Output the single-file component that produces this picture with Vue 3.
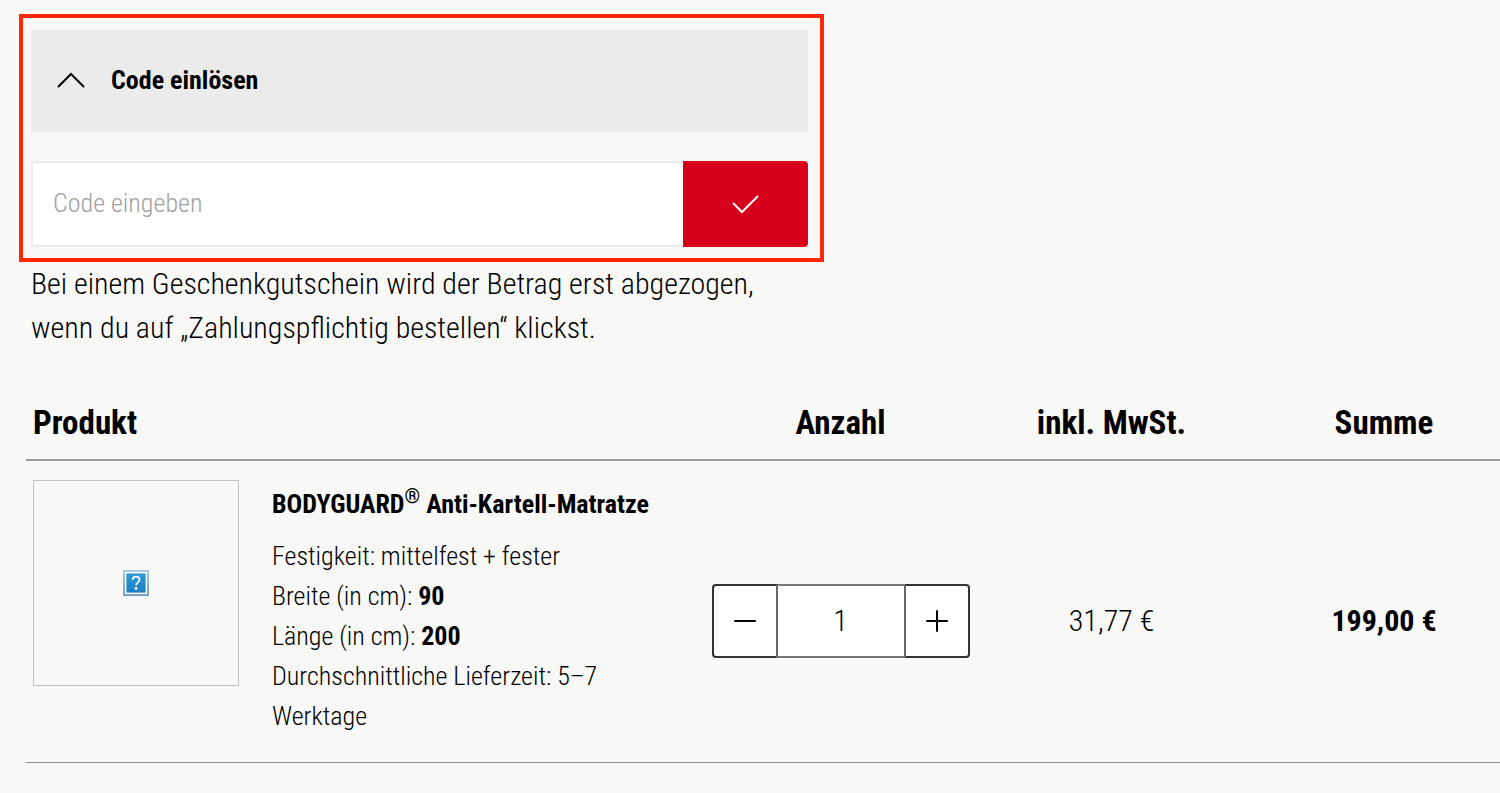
<script setup>
import { ref } from 'vue'

const code = ref('')
const open = ref(true)
const quantity = ref(1)

function decrease() {
  if (quantity.value > 1) quantity.value--
}
function increase() {
  quantity.value++
}
</script>

<template>
  <main class="cart">
    <section class="coupon">
      <button class="coupon-toggle" type="button" :aria-expanded="open" @click="open = !open">
        <svg width="28" height="16" viewBox="0 0 28 16" aria-hidden="true">
          <path d="M1.5 14.5 14 2l12.5 12.5" fill="none" stroke="#000" stroke-width="2" stroke-linecap="round" />
        </svg>
        <span>Code einlösen</span>
      </button>
      <form v-if="open" class="coupon-form" @submit.prevent>
        <input v-model="code" class="coupon-input" type="text" placeholder="Code eingeben" aria-label="Code eingeben" />
        <button class="coupon-submit" type="submit" aria-label="Code bestätigen">
          <svg width="28" height="20" viewBox="0 0 28 20" aria-hidden="true">
            <path d="M1.5 9.5 10 18 25.5 2.5" fill="none" stroke="#fff" stroke-width="2" stroke-linecap="round" />
          </svg>
        </button>
      </form>
    </section>

    <p class="note">
      Bei einem Geschenkgutschein wird der Betrag erst abgezogen,<br />
      wenn du auf „Zahlungspflichtig bestellen“ klickst.
    </p>

    <table class="items">
      <colgroup>
        <col />
        <col class="col-number" />
        <col class="col-number" />
        <col class="col-sum" />
      </colgroup>
      <thead>
        <tr>
          <th class="first" scope="col">Produkt</th>
          <th scope="col">Anzahl</th>
          <th scope="col">inkl. MwSt.</th>
          <th class="sum" scope="col">Summe</th>
        </tr>
      </thead>
      <tbody>
        <tr>
          <td class="first">
            <div class="product">
              <div class="thumb">
                <svg width="26" height="26" viewBox="0 0 27 27" role="img" aria-label="Bild fehlt">
                  <defs>
                    <linearGradient id="frame" x2="0" y2="1">
                      <stop offset="0" stop-color="#a4c8e8" />
                      <stop offset="1" stop-color="#6f9bca" />
                    </linearGradient>
                    <linearGradient id="fill" x2="0" y2="1">
                      <stop offset="0" stop-color="#2f9bd6" />
                      <stop offset="1" stop-color="#1b7fc0" />
                    </linearGradient>
                  </defs>
                  <rect width="27" height="27" fill="url(#frame)" />
                  <rect x="2" y="2" width="23" height="23" fill="#fff" />
                  <rect x="3.5" y="3.5" width="20" height="20" fill="url(#fill)" />
                  <path d="M10 10.2c.1-2 1.6-3.2 3.6-3.2s3.5 1.1 3.5 3c0 2.8-3.5 2.9-3.5 6" fill="none" stroke="#fff" stroke-width="1.8" />
                  <circle cx="13.5" cy="19.2" r="1.5" fill="#fff" />
                </svg>
              </div>
              <div class="details">
                <h2>BODYGUARD<sup>®</sup> Anti-Kartell-Matratze</h2>
                <p>Festigkeit: mittelfest + fester</p>
                <p>Breite (in cm): <strong>90</strong></p>
                <p>Länge (in cm): <strong>200</strong></p>
                <p>Durchschnittliche Lieferzeit: 5–7<br />Werktage</p>
              </div>
            </div>
          </td>
          <td>
            <div class="stepper">
              <button type="button" aria-label="Weniger" @click="decrease">
                <svg width="24" height="24" viewBox="0 0 24 24" aria-hidden="true">
                  <path d="M2 12h20" stroke="#000" stroke-width="2" stroke-linecap="round" />
                </svg>
              </button>
              <input v-model="quantity" type="text" inputmode="numeric" aria-label="Anzahl" />
              <button type="button" aria-label="Mehr" @click="increase">
                <svg width="24" height="24" viewBox="0 0 24 24" aria-hidden="true">
                  <path d="M2 12h20M12 2v20" stroke="#000" stroke-width="2" stroke-linecap="round" />
                </svg>
              </button>
            </div>
          </td>
          <td class="price">31,77 €</td>
          <td class="price sum"><strong>199,00 €</strong></td>
        </tr>
      </tbody>
    </table>
  </main>
</template>

<style>
body {
  margin: 0;
  background: #f8f8f7;
}
</style>

<style scoped>
* {
  box-sizing: border-box;
}
.cart {
  padding-top: 14px;
  color: #000;
  font-family: "Roboto Condensed", "Liberation Sans Narrow", Roboto, sans-serif;
  font-size: 26px;
  font-weight: 300;
  line-height: 40px;
}
button,
input {
  margin: 0;
  font: inherit;
  color: inherit;
}
button {
  cursor: pointer;
}
svg {
  display: block;
}
strong {
  font-weight: 700;
}
.coupon {
  max-width: 805px;
  margin-left: 19px;
  padding: 12px 12px 11px 8px;
  border: 4px solid #ff2600;
}
.coupon-toggle {
  display: flex;
  align-items: center;
  gap: 26px;
  width: 100%;
  height: 102px;
  padding: 0 26px 2px;
  border: 0;
  background: #ebebeb;
  font-weight: 700;
}
.coupon-form {
  display: flex;
  height: 86px;
  margin-top: 29px;
}
.coupon-input {
  flex: 1;
  min-width: 0;
  padding: 0 20px 2px;
  border: 2px solid #ebebeb;
  border-right: 0;
  background: #fff;
}
.coupon-input::placeholder {
  color: #a0a0a0;
  opacity: 1;
}
.coupon-submit {
  display: grid;
  place-items: center;
  width: 125px;
  border: 0;
  border-radius: 0 4px 4px 0;
  background: #d7001b;
}
.note {
  margin: 0 0 36px 31px;
  font-size: 30px;
  line-height: 44px;
}
.items {
  width: calc(100% - 26px);
  margin-left: 26px;
  border-collapse: separate;
  border-spacing: 0;
  table-layout: fixed;
}
.col-number {
  width: 271px;
}
.col-sum {
  width: 253px;
}
th,
td {
  padding: 0;
  text-align: center;
}
th {
  height: 75px;
  border-bottom: 2px solid #999;
  font-size: 33px;
  font-weight: 700;
}
td {
  padding: 43px 0 24px;
  border-bottom: 1px solid #8f8f8f;
}
.first {
  padding-left: 7px;
  text-align: left;
}
td.first {
  padding-top: 19px;
  padding-bottom: 26px;
}
.sum {
  padding-left: 21px;
}
.product {
  display: flex;
  gap: 33px;
}
.thumb {
  display: grid;
  flex: none;
  place-items: center;
  width: 206px;
  height: 206px;
  border: 1px solid #c2c2c2;
}
.details {
  white-space: nowrap;
}
h2 {
  margin: 4px 0 12px;
  font-size: 26px;
  font-weight: 700;
}
sup {
  font-size: 20px;
  line-height: 0;
}
p {
  margin: 0;
}
.stepper {
  display: flex;
  width: 258px;
  height: 74px;
  margin: 0 auto;
}
.stepper button {
  display: grid;
  place-items: center;
  width: 66px;
  padding: 0;
  border: 2px solid #333;
  border-right-color: #666;
  border-radius: 4px 0 0 4px;
  background: #fff;
}
.stepper button:last-child {
  border-right-color: #333;
  border-left-color: #666;
  border-radius: 0 4px 4px 0;
}
.stepper input {
  flex: 1;
  min-width: 0;
  padding: 0;
  border: 2px solid #777;
  border-width: 2px 0;
  border-radius: 0;
  background: #fff;
  font-size: 30px;
  text-align: center;
}
.price {
  font-size: 30px;
}
</style>
